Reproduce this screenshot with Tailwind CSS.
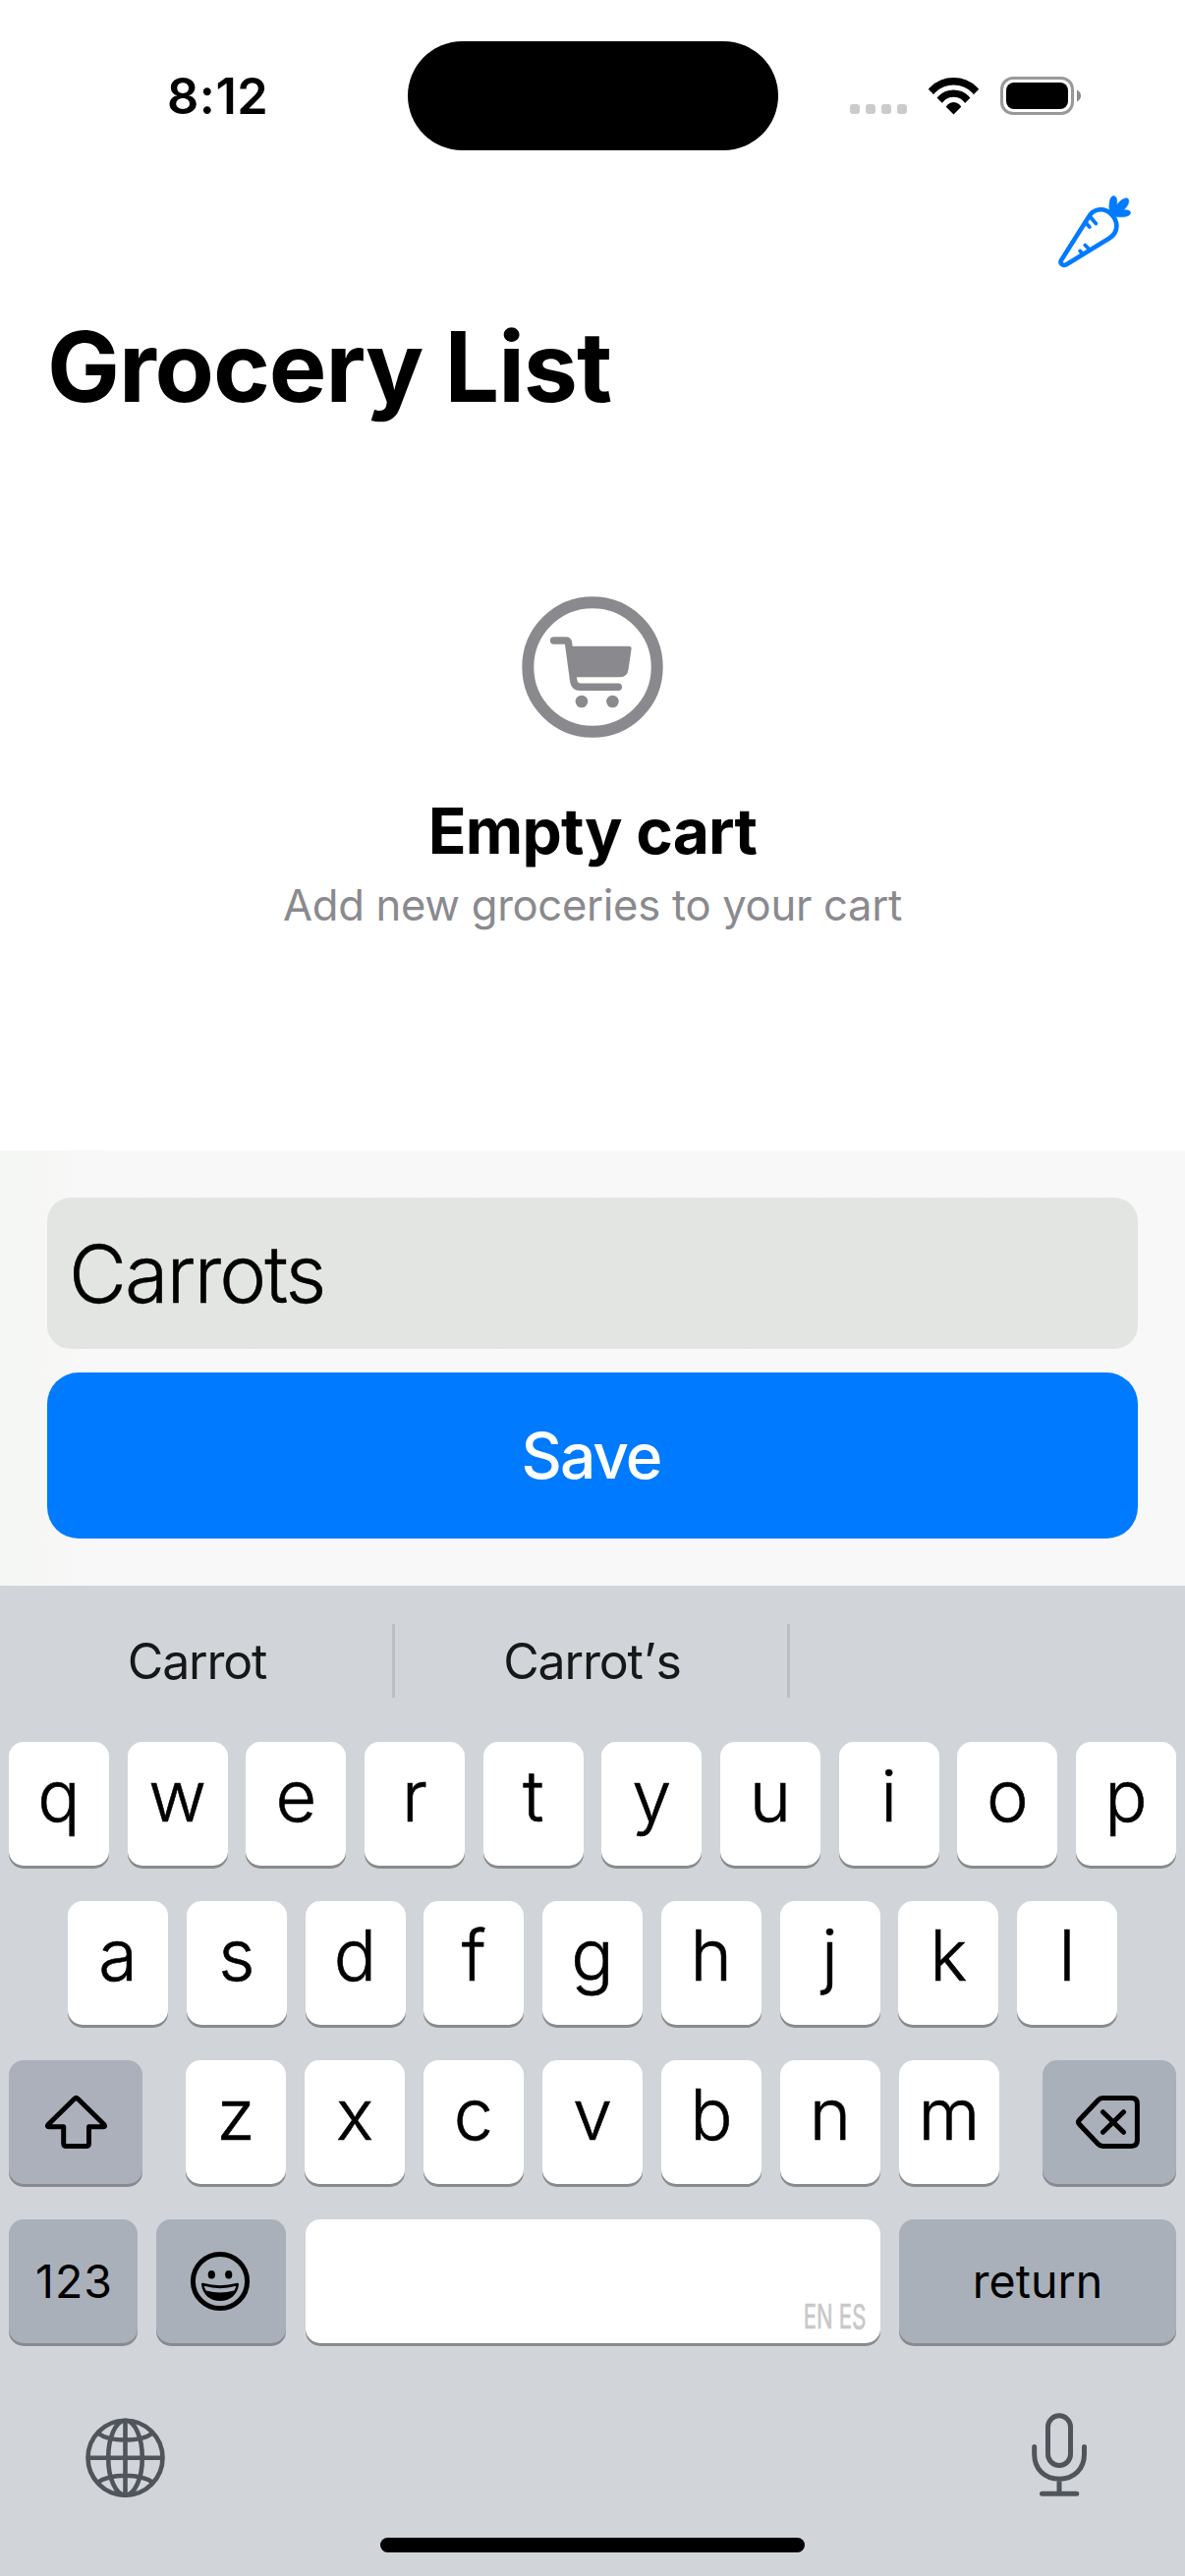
<!DOCTYPE html>
<html lang="en">
<head>
<meta charset="utf-8">
<title>Grocery List</title>
<script src="https://cdn.jsdelivr.net/npm/@tailwindcss/browser@4"></script>
</head>
<body class="bg-white">
<main class="flex h-[2622px] w-[1206px] flex-col overflow-hidden bg-white font-['Inter',sans-serif] text-black">

  <!-- Status bar -->
  <header class="flex h-[153px] shrink-0 items-center pt-[42px]">
    <div class="w-[415px] pl-[170px] text-[50.5px] leading-[60px] font-semibold tracking-[0.5px]">8:12</div>
    <div class="h-[111px] w-[377px] rounded-[56px] bg-black"></div>
    <div class="flex items-center gap-[22px] pl-[73px]">
      <svg class="h-[39px] w-[58px]" viewBox="865 78 58 39" fill="#cbcbcb">
        <rect x="865" y="106" width="10" height="10" rx="3"/><rect x="881" y="106" width="10" height="10" rx="3"/><rect x="897" y="106" width="10" height="10" rx="3"/><rect x="913" y="106" width="10" height="10" rx="3"/>
      </svg>
      <svg class="h-[39px] w-[51px]" viewBox="945 78 51 39">
        <clipPath id="wedge"><path d="M970.5 116.500L940 86V70H1001V86Z"/></clipPath>
        <g clip-path="url(#wedge)" fill="none" stroke="#000" stroke-width="7.400">
          <circle cx="970.500" cy="113" r="30.300"/><circle cx="970.500" cy="113" r="17.900"/><circle cx="970.500" cy="113" r="9" fill="#000" stroke="none"/>
        </g>
      </svg>
      <svg class="h-[39px] w-[83px]" viewBox="1018 78 83 39">
        <rect x="1019.500" y="79.500" width="72" height="36" rx="11.500" fill="none" stroke="#999" stroke-width="3"/>
        <rect x="1024" y="84" width="63" height="27" rx="8"/>
        <path d="M1096 91.500C1101.400 94 1101.400 101 1096 103.500Z" fill="#8c8c8c"/>
      </svg>
    </div>
  </header>

  <!-- Toolbar -->
  <nav class="flex h-[160px] shrink-0 justify-end pt-[43px] pr-[50px]">
    <svg class="h-20 w-20" viewBox="1076 196 80 80" fill="none" stroke="#007aff" stroke-linecap="round" stroke-linejoin="round">
      <path d="M1080.300 264.500L1107.500 221.500C1112 213 1122.500 210 1130.500 217.500C1138.800 225.500 1138.300 236.500 1129 242.500L1085.300 269.200C1081.500 271.200 1078 268 1080.300 264.500Z" stroke-width="4.600"/>
      <path d="M1105.300 227L1108.800 231M1109.500 220.800L1115.300 227.500M1099.200 255.500L1102.500 259M1104.300 249.500L1109.300 254.500" stroke-width="3.800"/>
      <path d="M1129.300 215C1128.200 209 1129.300 199.500 1133.200 199.500C1137 199.500 1137.200 205 1136.300 209C1139 205 1144 201 1147.300 201.800C1150.500 204 1148.500 209 1143.500 214C1147 213.300 1150.500 214 1150.500 216.500C1150.500 220.500 1142.500 221.500 1136 220.500L1132.500 219.500Z" fill="#007aff" stroke="#007aff" stroke-width="0.600"/>
    </svg>
  </nav>
  <h1 class="pl-12 text-[98.6px] leading-[120px] font-bold tracking-[-1.1px]">Grocery List</h1>

  <!-- Empty state -->
  <section class="flex flex-1 flex-col items-center pt-[174px]">
    <svg class="h-36 w-36" viewBox="531 607 144 144" fill="#8a8a8e">
      <circle cx="603" cy="679" r="65.700" fill="none" stroke="#8a8a8e" stroke-width="12"/>
      <path d="M563.600 652H576Q578.200 652 578.500 654.500L583.800 693.500Q584.800 699.200 590.500 699.200H629.300" fill="none" stroke="#8a8a8e" stroke-width="7.400" stroke-linecap="round"/>
      <path d="M579 657.700H640Q642.800 657.700 642.600 660.300L639.600 681Q638.500 689.300 631 689.300H583Z"/>
      <circle cx="591.900" cy="714" r="6.300"/><circle cx="623.400" cy="714" r="6.300"/>
    </svg>
    <h2 class="mt-[57px] text-[64px] leading-[76px] font-bold tracking-[-0.78px]">Empty cart</h2>
    <p class="mt-[11px] text-[43.6px] leading-[54px] tracking-[-0.3px] text-[#8a8a8e]">Add new groceries to your cart</p>
  </section>

  <!-- New item form -->
  <section class="flex h-[443px] shrink-0 flex-col gap-6 bg-linear-to-r from-[#f5f7f4] via-[#f8f8f8] via-10% to-[#f8f8f8] p-12">
    <div class="flex h-[154px] items-center rounded-3xl bg-[#e3e5e2] pt-[2px] pl-[22px] text-[81px] leading-none font-light tracking-[-2px] [-webkit-text-stroke:0.4px_#000]">Carrots</div>
    <button class="flex h-[169px] items-center justify-center rounded-[32px] bg-[#007aff] pr-[3px] text-[64px] leading-none font-medium tracking-[-2px] text-white">Save</button>
  </section>

  <!-- Keyboard -->
  <section class="flex h-[1008px] shrink-0 flex-col bg-[#d1d4d9]">
    <div class="flex h-[159px] pt-[39px] text-[50px] text-[#161719]">
      <div class="flex h-[75px] w-[402px] items-center justify-center border-r-3 border-[#bbbec4] pt-px pl-[2px] tracking-[-1.2px]">Carrot</div>
      <div class="flex h-[75px] w-[402px] items-center justify-center border-r-3 border-[#bbbec4] pt-px pl-[2px] tracking-[-1.2px]"><span>Carrot<span class="mx-[1px]">’</span>s</span></div>
    </div>

    <div class="flex flex-col gap-9 px-[9px] text-[72px] font-light">
      <div class="flex h-[126px] justify-between" id="row-1"></div>
      <div class="flex h-[126px] justify-between px-[60px]" id="row-2"></div>
      <div class="flex h-[126px] justify-between">
        <div class="flex w-[136px] items-center justify-center rounded-[15px] bg-[#abb0bb] shadow-[0_3px_0_#898a8d]">
          <svg class="h-[60px] w-[70px]" viewBox="42 2130 70 60" fill="none" stroke="#000" stroke-width="5" stroke-linejoin="round"><path d="M75.800 2136.200Q77.500 2134.500 79.200 2136.200L106 2162.500Q107.800 2164.700 105 2164.700H90.500V2181.500Q90.500 2184.500 87.500 2184.500H67.700Q64.700 2184.500 64.700 2181.500V2164.700H50Q47.200 2164.700 49 2162.500Z"/></svg>
        </div>
        <div class="flex w-[828px] justify-between" id="row-3"></div>
        <div class="flex w-[136px] items-center justify-center rounded-[15px] bg-[#aab0ba] shadow-[0_3px_0_#898a8d]">
          <svg class="h-[60px] w-[70px]" viewBox="1094 2130 70 60" fill="none" stroke="#000" stroke-width="5" stroke-linecap="round" stroke-linejoin="round"><path d="M1098.300 2158L1117.500 2137.800Q1119.500 2135.600 1122.500 2135.600H1151.500Q1157.400 2135.600 1157.400 2141.500V2178.500Q1157.400 2184.400 1151.500 2184.400H1122.500Q1119.500 2184.400 1117.500 2182.200L1098.300 2162Q1096.600 2160 1098.300 2158ZM1122.500 2149.700L1143.500 2170.300M1143.500 2149.700L1122.500 2170.300"/></svg>
        </div>
      </div>
      <div class="flex h-[126px] text-[46.5px] font-normal">
        <div class="mr-[19px] flex w-[131px] items-center justify-center rounded-[15px] bg-[#aab0ba] pt-[2px] pl-[2px] tracking-[1px] shadow-[0_3px_0_#898a8d]">123</div>
        <div class="mr-5 flex w-[132px] items-center justify-center rounded-[15px] bg-[#aab0ba] shadow-[0_3px_0_#898a8d]">
          <svg class="mr-[2px] h-16 w-16" viewBox="192 2290 64 64">
            <circle cx="224" cy="2322" r="27.600" fill="none" stroke="#000" stroke-width="5"/>
            <ellipse cx="215.300" cy="2315.300" rx="3.600" ry="4.300"/><ellipse cx="232.700" cy="2315.300" rx="3.600" ry="4.300"/>
            <path d="M206.500 2323.800Q224 2328.500 241.500 2323.800Q243.300 2323.600 243 2325.500C241.500 2336 234 2342 224 2342C214 2342 206.500 2336 205 2325.500Q204.700 2323.600 206.500 2323.800Z"/>
            <path d="M207.800 2326.800Q224 2331.500 240.200 2326.800Q239.700 2329.500 238.300 2331.600Q224 2335.500 209.700 2331.600Q208.300 2329.500 207.800 2326.800Z" fill="#aab0ba"/>
          </svg>
        </div>
        <div class="mr-[19px] flex w-[585px] items-end justify-end rounded-[15px] bg-white pr-[15px] pb-[6px] text-[34.5px] leading-[42px] text-[#c8c8c8] shadow-[0_3px_0_#898a8d]"><span class="inline-block origin-right scale-x-[0.64] [-webkit-text-stroke:0.7px_#c8c8c8]">EN ES</span></div>
        <div class="flex w-[282px] items-center justify-center rounded-[15px] bg-[#aab0ba] pt-[2px] shadow-[0_3px_0_#898a8d]">return</div>
      </div>
    </div>

    <div class="flex h-[198px] items-end justify-between pr-[97px] pb-[39px] pl-[86px]">
      <svg class="h-[84px] w-[84px]" viewBox="86 2460 84 84" fill="none" stroke="#50555c" stroke-width="4.600">
        <circle cx="127.500" cy="2501.700" r="38"/><ellipse cx="127.500" cy="2501.700" rx="17.300" ry="38"/>
        <path d="M127.500 2463V2540M89 2501.700H166M99.500 2476.500C112 2486 143 2486 155.500 2476.500M99.500 2526.900C112 2517.400 143 2517.400 155.500 2526.900"/>
      </svg>
      <svg class="h-[90px] w-[62px]" viewBox="1047 2454 62 90" fill="none" stroke="#50555c" stroke-width="5" stroke-linecap="round">
        <rect x="1066.500" y="2458.800" width="23" height="50.700" rx="11.500"/>
        <path d="M1052.700 2490.500V2498C1052.700 2513 1063 2523.200 1078 2523.200S1103.500 2513 1103.500 2498V2490.500M1078 2524V2538M1060.500 2538.300H1095.800"/>
      </svg>
    </div>
    <div class="mx-auto h-[15px] w-[432px] rounded-full bg-black"></div>
  </section>
</main>

<template id="key"><div class="flex w-[102px] items-center justify-center rounded-[15px] bg-white pb-4 leading-none shadow-[0_3px_0_#898a8d] [-webkit-text-stroke:0.6px_#000]"></div></template>
<script>
  const key = document.getElementById('key').content.firstElementChild;
  ['qwertyuiop', 'asdfghjkl', 'zxcvbnm'].forEach((letters, i) => {
    const row = document.getElementById('row-' + (i + 1));
    for (const letter of letters) {
      const cap = key.cloneNode();
      cap.textContent = letter;
      row.append(cap);
    }
  });
</script>
</body>
</html>
